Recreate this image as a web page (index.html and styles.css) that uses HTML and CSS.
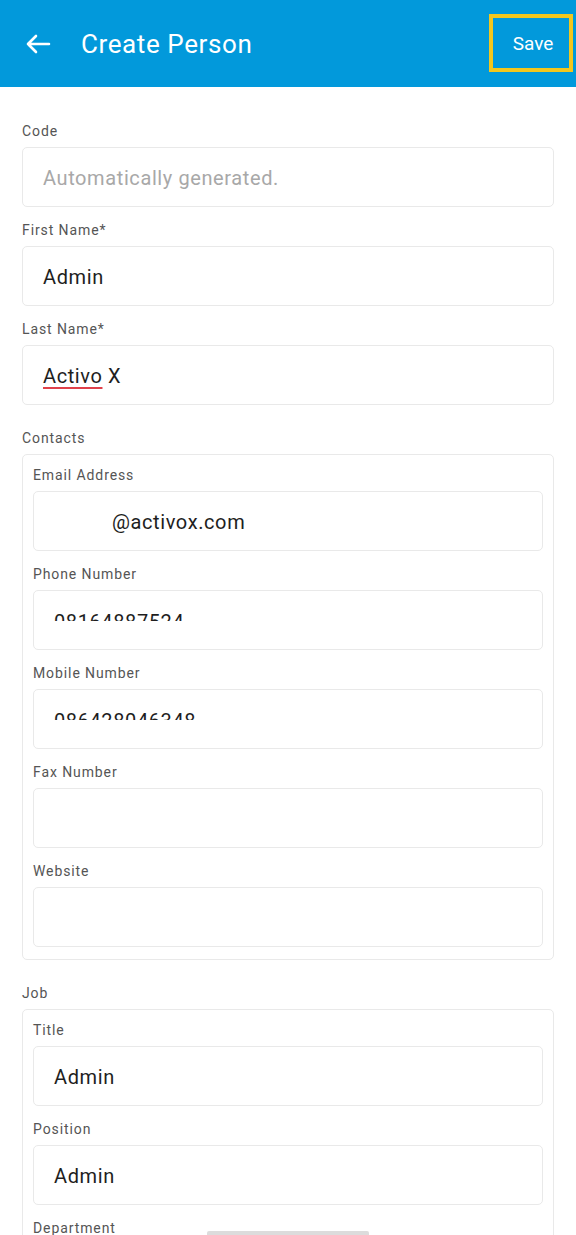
FILE: index.html
```html
<!DOCTYPE html>
<html lang="en">
<head>
<meta charset="utf-8">
<title>Create Person</title>
<link rel="stylesheet" href="styles.css">
</head>
<body>
<header class="appbar">
  <button class="back" aria-label="Back">
    <svg width="26" height="24" viewBox="0 0 26 24"><path d="M24 12H3M11 4L3 12L11 20" fill="none" stroke="#fff" stroke-width="2.6" stroke-linecap="round" stroke-linejoin="round"/></svg>
  </button>
  <h1 class="title">Create Person</h1>
  <button class="save">Save</button>
</header>

<main class="form">
  <div class="field">
    <div class="label">Code</div>
    <div class="input"><span class="placeholder">Automatically generated.</span></div>
  </div>
  <div class="field">
    <div class="label">First Name*</div>
    <div class="input"><span class="value">Admin</span></div>
  </div>
  <div class="field">
    <div class="label">Last Name*</div>
    <div class="input"><span class="value"><span class="misspelled">Activo</span> X</span></div>
  </div>

  <section class="group">
    <div class="label">Contacts</div>
    <div class="card">
      <div class="field">
        <div class="label">Email Address</div>
        <div class="input"><span class="value"><span class="redacted"></span>@activox.com</span></div>
      </div>
      <div class="field">
        <div class="label">Phone Number</div>
        <div class="input clipped"><div class="clip"><span class="value">08164887524</span></div></div>
      </div>
      <div class="field">
        <div class="label">Mobile Number</div>
        <div class="input clipped"><div class="clip"><span class="value">086428046348</span></div></div>
      </div>
      <div class="field">
        <div class="label">Fax Number</div>
        <div class="input"></div>
      </div>
      <div class="field last">
        <div class="label">Website</div>
        <div class="input"></div>
      </div>
    </div>
  </section>

  <section class="group">
    <div class="label">Job</div>
    <div class="card job">
      <div class="field">
        <div class="label">Title</div>
        <div class="input"><span class="value">Admin</span></div>
      </div>
      <div class="field">
        <div class="label">Position</div>
        <div class="input"><span class="value">Admin</span></div>
      </div>
      <div class="field">
        <div class="label">Department</div>
        <div class="input"></div>
      </div>
    </div>
  </section>
</main>
<div class="home-indicator"></div>
</body>
</html>
```

FILE: styles.css
```css
html, body {
  margin: 0;
  padding: 0;
  height: 1235px;
  overflow: hidden;
  background: #ffffff;
  font-family: Roboto, "Noto Sans", "Liberation Sans", sans-serif;
}

.appbar {
  height: 87px;
  background: #0299db;
  display: flex;
  align-items: center;
  box-sizing: border-box;
  padding: 0 3px 0 25px;
}

.back {
  background: none;
  border: 0;
  padding: 0;
  width: 26px;
  height: 24px;
  display: flex;
  margin-top: 1px;
}

.title {
  margin: 0 0 0 30px;
  flex: 1;
  color: #ffffff;
  font-size: 26px;
  font-weight: 400;
  letter-spacing: 0.6px;
}

.save {
  width: 84px;
  height: 58px;
  margin-top: -1px;
  box-sizing: border-box;
  border: 4px solid #f3c71d;
  background: transparent;
  color: #ffffff;
  font-family: Roboto, "Noto Sans", sans-serif;
  font-size: 19px;
  padding: 1px 0 0 4px;
}

.form {
  padding: 36px 22px 0 22px;
}

.label {
  font-size: 14px;
  line-height: 16px;
  color: #555555;
  letter-spacing: 0.9px;
  margin-bottom: 8px;
}

.field {
  margin-bottom: 15px;
}

.input {
  height: 60px;
  box-sizing: border-box;
  border: 1px solid #e9e9e9;
  border-radius: 5px;
  display: flex;
  align-items: center;
  padding: 1px 20px 0 20px;
  font-size: 20px;
  letter-spacing: 0.6px;
}

.value {
  color: #1e1e1e;
}

.placeholder {
  color: #a8a8a8;
}

.misspelled {
  text-decoration: underline;
  text-decoration-color: #e0414a;
  text-decoration-thickness: 2px;
  text-underline-offset: 4px;
}

.redacted {
  display: inline-block;
  width: 58px;
}

.input.clipped {
  align-items: flex-start;
}

.clip {
  height: 29px;
  box-sizing: border-box;
  padding-top: 18px;
  overflow: hidden;
  line-height: 24px;
}

.clip .value {
  display: block;
  height: 11px;
  overflow: hidden;
  margin-top: -3px;
  padding-top: 3px;
}

.group {
  margin-top: 25px;
}

.group > .label {
  margin-bottom: 8px;
}

.card {
  border: 1px solid #e9e9e9;
  border-radius: 5px;
  padding: 12px 10px 12px 10px;
}

.card.job {
  padding-top: 12px;
}

.card .field.last {
  margin-bottom: 0;
}

.home-indicator {
  position: fixed;
  left: 207px;
  bottom: 0;
  width: 162px;
  height: 4px;
  background: #dcdcdc;
  border-radius: 2px 2px 0 0;
}
```
